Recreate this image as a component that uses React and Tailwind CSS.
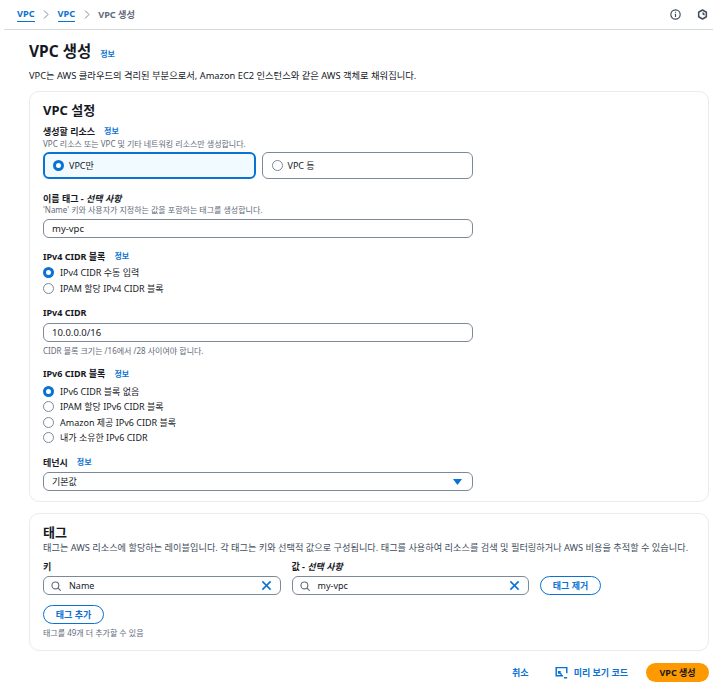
const font = { fontFamily: '"Noto Sans", "Noto Sans CJK KR", sans-serif' };

function Info({ className = "" }) {
  return <span className={`text-[8px] font-bold text-[#0972d3] leading-none ${className}`}>정보</span>;
}

function Label({ children, info, className = "" }) {
  return (
    <div className={`flex items-center gap-[9px] h-[12px] text-[9px] font-bold text-[#16191f] leading-none ${className}`}>
      <span>{children}</span>
      {info && <Info />}
    </div>
  );
}

function Desc({ children, className = "" }) {
  return <div className={`h-[12px] flex items-center text-[8px] text-[#5f6b7a] leading-none whitespace-nowrap ${className}`}>{children}</div>;
}

function Dot({ on }) {
  return on ? (
    <span className="block w-[11px] h-[11px] rounded-full border-[3.5px] border-[#0972d3] bg-white shrink-0" />
  ) : (
    <span className="block w-[11px] h-[11px] rounded-full border-[1.25px] border-[#7d8998] bg-white shrink-0" />
  );
}

function Radio({ on, children }) {
  return (
    <div className="flex items-center gap-[6px] h-[15.4px] text-[9px] text-[#16191f] leading-none">
      <Dot on={on} />
      <span>{children}</span>
    </div>
  );
}

function Input({ children, className = "" }) {
  return (
    <div className={`h-[19px] w-[430px] rounded-[6px] border-[1.5px] border-[#7d8998] pl-[8px] flex items-center text-[9.5px] text-[#16191f] leading-none ${className}`}>
      {children}
    </div>
  );
}

function Search() {
  return (
    <svg width="10" height="10" viewBox="0 0 16 16" fill="none" stroke="#5f6b7a" strokeWidth="1.8" className="shrink-0">
      <circle cx="7" cy="7" r="5.5" />
      <path d="M11 11l4.5 4.5" />
    </svg>
  );
}

function TagInput({ children }) {
  return (
    <div className="h-[19px] flex-1 min-w-0 rounded-[6px] border-[1.5px] border-[#7d8998] pl-[7px] pr-[8px] flex items-center gap-[8px] text-[9px] text-[#16191f] leading-none">
      <Search />
      <span className="flex-1">{children}</span>
      <svg width="11" height="11" viewBox="0 0 16 16" fill="none" stroke="#0972d3" strokeWidth="2.2">
        <path d="M2 2l12 12M14 2L2 14" />
      </svg>
    </div>
  );
}

function Pill({ children, className = "" }) {
  return (
    <div className={`h-[19px] rounded-full border-[1.5px] border-[#0972d3] flex items-center justify-center text-[9px] font-bold text-[#0972d3] leading-none ${className}`}>
      {children}
    </div>
  );
}

export default function App() {
  return (
    <div style={font} className="w-[728px] h-[694px] bg-white overflow-hidden">
      <header className="ml-[4px] mr-[15px] h-[30px] border-b border-[#d5dbdb] pl-[13px] pr-[5px] flex items-center justify-between">
        <nav className="flex items-center text-[9.2px] font-bold leading-none">
          <span className="text-[#0972d3] border-b border-[#0972d3] pb-[2px] mt-[2px]">VPC</span>
          <svg width="6" height="9" viewBox="0 0 6 9" fill="none" stroke="#7d8998" strokeWidth="1" className="mx-[8.5px]"><path d="M1 .5l4 4-4 4" /></svg>
          <span className="text-[#0972d3] border-b border-[#0972d3] pb-[2px] mt-[2px]">VPC</span>
          <svg width="6" height="9" viewBox="0 0 6 9" fill="none" stroke="#7d8998" strokeWidth="1" className="mx-[8.5px]"><path d="M1 .5l4 4-4 4" /></svg>
          <span className="text-[#5f6b7a]">VPC 생성</span>
        </nav>
        <div className="flex items-center gap-[16px]">
          <svg width="11" height="11" viewBox="0 0 16 16" fill="none" stroke="#414d5c" strokeWidth="1.7">
            <circle cx="8" cy="8" r="6.8" />
            <path d="M8 7v4.5M8 4v1.6" />
          </svg>
          <svg width="11" height="11" viewBox="0 0 16 16" fill="none" stroke="#414d5c" strokeWidth="2.2">
            <path d="M8 1.5l5.6 3.2v6.6L8 14.5l-5.6-3.2V4.700z" strokeLinejoin="round" />
            <path d="M8 8V4.800A3.200 3.200 0 0 1 10.800 9.600z" fill="#414d5c" stroke="none" />
          </svg>
        </div>
      </header>

      <main className="pl-[29px] pr-[19px]">
        <div className="flex items-center gap-[9px] h-[24px] mt-[10px]">
          <h1 className="text-[15.5px] font-bold text-[#16191f] leading-none">VPC 생성</h1>
          <Info className="mt-[3px] text-[7.5px]" />
        </div>
        <p className="mt-[5px] h-[13px] flex items-center text-[9.3px] text-[#16191f] leading-none whitespace-nowrap">
          VPC는 AWS 클라우드의 격리된 부분으로서, Amazon EC2 인스턴스와 같은 AWS 객체로 채워집니다.
        </p>

        <section className="mt-[9px] h-[411px] rounded-[10px] border border-[#e9ebed] pl-[13px] pt-[9px] pr-[13px]">
          <h2 className="h-[18px] flex items-center text-[13px] font-bold text-[#16191f] leading-none">VPC 설정</h2>
          <Label info className="mt-[6px]">생성할 리소스</Label>
          <Desc className="mt-[1px]">VPC 리소스 또는 VPC 및 기타 네트워킹 리소스만 생성합니다.</Desc>
          <div className="mt-[2px] w-[430px] flex gap-[6px]">
            <div className="flex-1 h-[27px] rounded-[6px] border-2 border-[#0972d3] bg-[#f1faff] pl-[8px] flex items-center gap-[5px] text-[9px] text-[#16191f] leading-none">
              <Dot on /><span>VPC만</span>
            </div>
            <div className="flex-1 h-[27px] rounded-[6px] border-[1.5px] border-[#7d8998] pl-[9px] flex items-center gap-[5px] text-[9px] text-[#16191f] leading-none">
              <Dot /><span>VPC 등</span>
            </div>
          </div>

          <Label className="mt-[13px]">
            <span>이름 태그 - <i>선택 사항</i></span>
          </Label>
          <Desc>'Name' 키와 사용자가 지정하는 값을 포함하는 태그를 생성합니다.</Desc>
          <Input className="mt-[3px]">my-vpc</Input>

          <Label info className="mt-[12px]">IPv4 CIDR 블록</Label>
          <div className="mt-[3px]">
            <Radio on>IPv4 CIDR 수동 입력</Radio>
            <Radio>IPAM 할당 IPv4 CIDR 블록</Radio>
          </div>

          <Label className="mt-[11px]">IPv4 CIDR</Label>
          <Input className="mt-[4px]">10.0.0.0/16</Input>
          <Desc className="mt-[3px]">CIDR 블록 크기는 /16에서 /28 사이여야 합니다.</Desc>

          <Label info className="mt-[11px]">IPv6 CIDR 블록</Label>
          <div className="mt-[4px]">
            <Radio on>IPv6 CIDR 블록 없음</Radio>
            <Radio>IPAM 할당 IPv6 CIDR 블록</Radio>
            <Radio>Amazon 제공 IPv6 CIDR 블록</Radio>
            <Radio>내가 소유한 IPv6 CIDR</Radio>
          </div>

          <Label info className="mt-[11px]">테넌시</Label>
          <div className="mt-[4px] h-[19px] w-[430px] rounded-[6px] border-[1.5px] border-[#7d8998] pl-[8px] pr-[10px] flex items-center justify-between text-[9px] text-[#16191f] leading-none">
            <span>기본값</span>
            <svg width="9" height="6" viewBox="0 0 9 6"><path d="M0 0h9L4.5 6z" fill="#0972d3" /></svg>
          </div>
        </section>

        <section className="mt-[11px] h-[138px] rounded-[10px] border border-[#e9ebed] pl-[13px] pt-[9px] pr-[13px]">
          <h2 className="h-[18px] flex items-center text-[13px] font-bold text-[#16191f] leading-none">태그</h2>
          <div className="mt-[1px] h-[12px] flex items-center text-[9.2px] text-[#414d5c] leading-none whitespace-nowrap">
            태그는 AWS 리소스에 할당하는 레이블입니다. 각 태그는 키와 선택적 값으로 구성됩니다. 태그를 사용하여 리소스를 검색 및 필터링하거나 AWS 비용을 추적할 수 있습니다.
          </div>
          <div className="mt-[4px] flex gap-[11px] w-[558px]">
            <div className="w-[238px]">
              <Label className="mt-[2px]">키</Label>
              <div className="mt-[4px] flex h-[19px]"><TagInput>Name</TagInput></div>
            </div>
            <div className="w-[238px]">
              <Label className="mt-[2px]">
                <span>값 - <i>선택 사항</i></span>
              </Label>
              <div className="mt-[4px] flex h-[19px]"><TagInput>my-vpc</TagInput></div>
            </div>
            <Pill className="w-[61px] mt-[18px] shrink-0">태그 제거</Pill>
          </div>
          <Pill className="w-[61px] mt-[10px]">태그 추가</Pill>
          <Desc className="mt-[3px]">태그를 49개 더 추가할 수 있음</Desc>
        </section>

        <footer className="mt-[11px] h-[20px] flex items-center justify-end text-[9px] font-bold leading-none">
          <span className="text-[#0972d3]">취소</span>
          <svg width="13" height="13" viewBox="0 0 16 16" fill="none" stroke="#0972d3" strokeWidth="1.8" className="ml-[26px]">
            <path d="M10 12H1.500V2h13v7" />
            <path d="M7 7H4.500v2.500M4.800 7.300l3.400 3.400" />
            <path d="M11 14.500h4" />
          </svg>
          <span className="ml-[6px] text-[#0972d3]">미리 보기 코드</span>
          <div className="ml-[18px] w-[63px] h-[19px] rounded-full bg-[#ff9900] flex items-center justify-center text-[#16191f]">VPC 생성</div>
        </footer>
      </main>
    </div>
  );
}
